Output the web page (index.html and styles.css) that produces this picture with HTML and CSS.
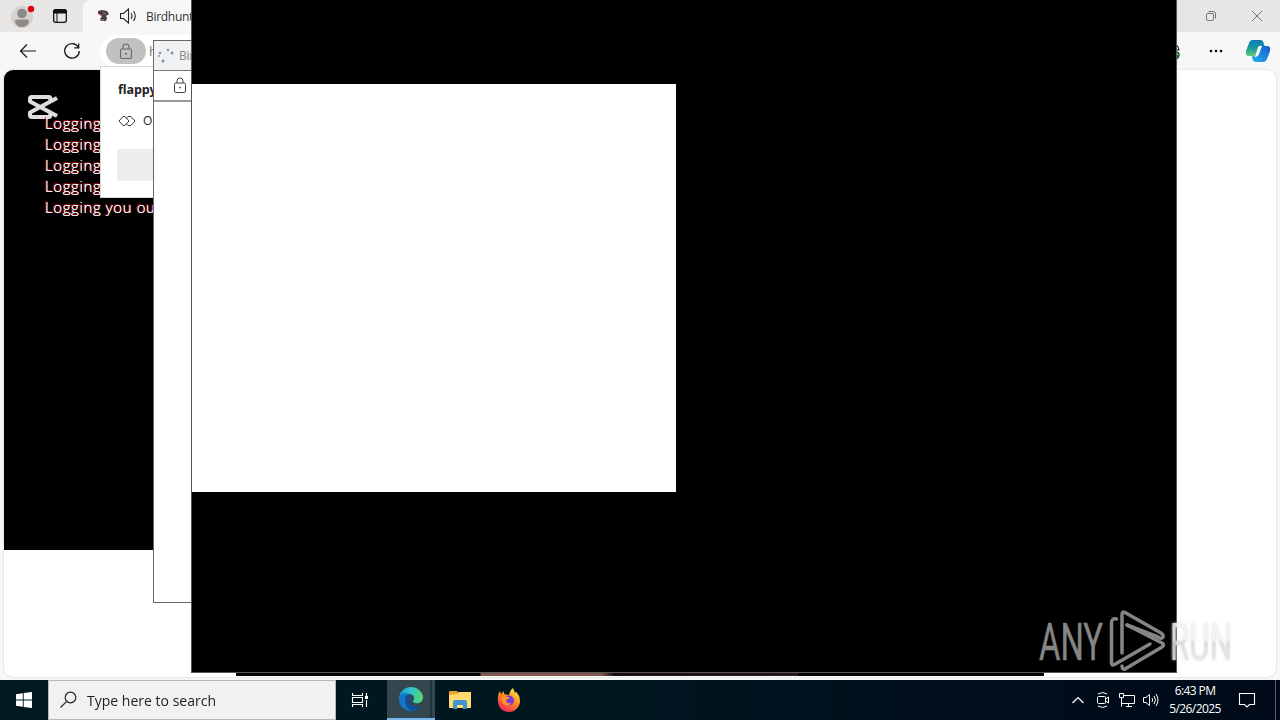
FILE: index.html
```html
<!DOCTYPE html>
<html lang="en">
<head>
<meta charset="utf-8">
<title>Desktop</title>
<link rel="stylesheet" href="styles.css">
</head>
<body>
<main class="desktop">
  <section class="browser">
    <header class="tabs">
      <svg class="profile" width="32" height="30" viewBox="0 0 32 30"><circle cx="16" cy="16" r="11" fill="#d5d2cf"/><circle cx="16" cy="12.500" r="4.800" fill="#8d8a87"/><path d="M9 20q0-1.500 2-1.500h10q2 0 2 1.500c0 4-4 6-7 6s-7-2-7-6z" fill="#8d8a87"/><circle cx="25" cy="8" r="3.200" fill="#e3000f"/></svg>
      <svg class="workspace" width="16" height="16" viewBox="0 0 16 16"><rect x="1.700" y="1.700" width="12.600" height="12.600" rx="2" fill="none" stroke="#111" stroke-width="1.300"/><path d="M1.500 5V3.500q0-2 2-2h9q2 0 2 2V5zM5 5v9" fill="#111" stroke="#111"/></svg>
      <div class="tab">
        <svg width="14" height="16" viewBox="0 0 14 16"><path d="M2 3l4-1 5 1 2 3-3 2 1 2-1 3H5l-1-2 2-3-4-3z" fill="#493f4a"/><path d="M2 5l3 2 2-1M5 11l3 1" stroke="#a44a50" stroke-width="1.200"/><path d="M7 5l3 1M5 12h3" stroke="#918894" stroke-width=".8"/></svg>
        <svg class="sound" width="18" height="18" viewBox="0 0 18 18" fill="none" stroke="#222" stroke-width="1.100"><path d="M1.500 6.500v5h3l5 4.500V2L4.500 6.500zM12 6q2 3 0 6M14.500 4q3.500 5 0 10"/></svg>
        <span>Birdhunt</span>
      </div>
      <div class="caption">
        <svg width="12" height="12" viewBox="0 0 12 12" fill="none" stroke="#777"><rect x="1.500" y="3.500" width="7" height="7" rx="1.500"/><path d="M3.500 1.500H8q2.500 0 2.500 2.500v4.500"/></svg>
        <svg width="12" height="12" viewBox="0 0 12 12" stroke="#777"><path d="M1 1l10 10M11 1L1 11"/></svg>
      </div>
    </header>
    <div class="toolbar">
      <svg class="back" width="18" height="16" viewBox="0 0 18 16" fill="none" stroke="#1a1a1a" stroke-width="1.200"><path d="M17 8H1.500M8 1.500L1.500 8 8 14.500"/></svg>
      <svg class="reload" width="18" height="18" viewBox="0 0 18 18" fill="none" stroke="#1a1a1a" stroke-width="1.300"><path d="M15.200 5A7.300 7.300 0 1 0 16.300 9M15.700 1.500v4.300h-4.500"/></svg>
      <div class="address">
        <span class="site"><svg width="14" height="17" viewBox="0 0 14 17" fill="none" stroke="#666" stroke-width="1.100"><rect x="1.500" y="6" width="11" height="9.500" rx="1.500"/><path d="M4 6V4q0-3 3-3t3 3v2"/><circle cx="7" cy="10.700" r=".5"/></svg></span><span class="url">h</span>
      </div>
      <div class="tools">
        <svg class="ext" width="8" height="20" viewBox="0 0 8 20"><path d="M0 3q5 0 6 6H0" fill="none" stroke="#222" stroke-width="1.200"/><path d="M0 10.500h5q3 2 1 6-2 3-6 2z" fill="#176e20"/><path d="M2 15l3-2" stroke="#fff"/></svg>
        <svg class="dots" width="14" height="4" viewBox="0 0 14 4"><circle cx="2" cy="2" r="1.300"/><circle cx="7" cy="2" r="1.300"/><circle cx="12" cy="2" r="1.300"/></svg>
        <svg class="copilot" width="26" height="24" viewBox="0 0 26 24"><defs><linearGradient id="ca" x1=".3" x2=".3" y2="1"><stop stop-color="#1677b8"/><stop offset=".5" stop-color="#159b9e"/><stop offset="1" stop-color="#62c96b"/></linearGradient><linearGradient id="cb" x1="0" y1="1" x2="1" y2="0"><stop stop-color="#28b0ed"/><stop offset=".6" stop-color="#197ede"/><stop offset="1" stop-color="#1b57c5"/></linearGradient></defs><path d="M8 1h8q2 0 2.700 3l.8 3H16q-2 0-3 3l-2 5q-.8 2-3 2H4q-4 0-3-5L4 4q1-3 4-3z" fill="url(#ca)"/><path d="M18 7h4q4 0 3 5l-3 8q-1 3-4 3h-7q-3 0-3.500-3L7 17h2q2 0 3-3l2-4q1-3 4-3z" fill="url(#cb)"/><path d="M13 8q1-1.500 4-1l-3 8q-1 3-5 3 2-1 2-3z" fill="#fff"/></svg>
      </div>
    </div>
    <div class="page">
      <div class="game">
        <svg class="mark" width="32" height="26" viewBox="0 0 32 26" fill="none" stroke="#dedede" stroke-width="4" stroke-linejoin="round"><path d="M30 4L3 18.500V21q0 2 2 2h17q2 0 1-3.500M30 22L3 7.500V5q0-2 2-2h17q2 0 1 3.500"/></svg>
        <p>Logging you out</p><p>Logging you out</p><p>Logging you out</p><p>Logging you out</p><p>Logging you out</p>
      </div>
    </div>
  </section>

  <aside class="prompt">
    <strong>flappy</strong>
    <div class="permission"><svg width="18" height="12" viewBox="0 0 18 12" fill="none" stroke="#333"><path d="M5 1.500h2L11 6l-4 4.500H5L1 6zM10 1.500h3L17 6l-4 4.500h-3L8 8.500M8 3.500l2-2"/></svg><span>O</span></div>
    <div class="button"></div>
  </aside>

  <section class="popup-back">
    <div class="popup-title"><svg width="18" height="18" viewBox="0 0 18 18" fill="#7893b2"><circle cx="3" cy="6" r="1.300"/><circle cx="11" cy="3" r="1.200"/><circle cx="15" cy="6" r="1.500"/><circle cx="6" cy="14" r="1.500"/><circle cx="2" cy="9" r=".9"/></svg><span>Birdhunt</span></div>
    <div class="popup-address"><svg width="14" height="17" viewBox="0 0 14 17" fill="none" stroke="#444"><rect x="1.500" y="6" width="11" height="9.500" rx="1.500"/><path d="M4 6V4q0-3 3-3t3 3v2"/><circle cx="7" cy="10.700" r=".5"/></svg></div>
  </section>
  <section class="popup-edge"></section>
  <section class="popup-front"><div class="blank"></div></section>

  <svg class="watermark" width="210" height="66" viewBox="0 0 210 66">
    <defs><linearGradient id="fade" gradientUnits="userSpaceOnUse" x1="0" y1="14" x2="0" y2="52"><stop offset=".45" stop-color="#f2f2f2"/><stop offset=".55" stop-color="#dadada"/><stop offset="1" stop-color="#e6e6e6"/></linearGradient><linearGradient id="letters" gradientUnits="userSpaceOnUse" x1="134" y1="0" x2="196" y2="0"><stop offset=".105" stop-color="#858585"/><stop offset=".11" stop-color="#858585" stop-opacity="0"/></linearGradient></defs>
    <text class="any" x="3" y="51.500" textLength="64" lengthAdjust="spacingAndGlyphs">ANY</text>
    <g class="run"><text x="134" y="51.500" textLength="62" lengthAdjust="spacingAndGlyphs">RUN</text></g>
    <path d="M136 14.500v37" stroke="url(#letters)" stroke-width="0"/>
    <g fill="none" stroke="#858585" stroke-width="3.500" stroke-linejoin="round" stroke-linecap="round"><path d="M80.500 11q-5-1-5 4v40q0 3 3 1.500L114 36"/><path d="M86 45V7q0-4 3-2.500L125 25q4 3 1 5-2 1-4-1L91 17"/><path d="M91 17l35 18q3 2 0 4L89 61q-3 1-3-3"/></g>
  </svg>

  <footer class="taskbar">
    <div class="start"><svg width="16" height="16" viewBox="0 0 16 16" fill="#fff"><path d="M0 2.200l6.800-1V7.500H0zM7.700 1L16 0v7.500H7.700zM0 8.400h6.800v6.400L0 13.800zM7.700 8.400H16V16l-8.300-1z"/></svg></div>
    <div class="search"><svg width="18" height="18" viewBox="0 0 18 18" fill="none" stroke="#222" stroke-width="1.200"><circle cx="10.500" cy="6.500" r="5.300"/><path d="M6.700 10.300L.5 16.500"/></svg><span>Type here to search</span></div>
    <div class="app"><svg width="18" height="18" viewBox="0 0 18 18" fill="none" stroke="#fff" stroke-width="1.100"><path d="M1.500 2v2.500h10V2M1.500 16v-2.500h10V16M1.500 6.500h10v5h-10zM15.500 2v3M15.500 9v7"/><path d="M14.500 5.500h2v2h-2z" fill="#fff"/></svg></div>
    <div class="app active"><svg width="26" height="26" viewBox="0 0 26 26"><defs><linearGradient id="ea"><stop stop-color="#219bd8"/><stop offset=".5" stop-color="#2bc6d0"/><stop offset="1" stop-color="#62d667"/></linearGradient></defs><path d="M1 12C2 5 7 1 13 1s12 5 12 10c0 5-4 7-8 6-3-1-2-2-1-4 1-3-2-5-5-5-5 0-9 2-10 5z" fill="url(#ea)"/><path d="M1 13c0-5 5-7 10-5-5 2-5 9 0 13 3 2 7 2 10 0-2 3-6 5-9 4C5 24 1 19 1 13z" fill="#1477ce"/><path d="M11 8c-6 3-5 12 2 17 4 0 8-2 9-5-6 2-11-1-11-6 0-2 1-3 2-4z" fill="#104f9b"/></svg></div>
    <div class="app"><svg width="22" height="20" viewBox="0 0 22 20"><path d="M0 2q0-1 1-1h7l2 2h11q1 0 1 1v14H0z" fill="#e6a52c"/><path d="M0 5l8-1 2-2h12v16H0z" fill="#ffda6c"/><path d="M4 19v-7q0-2 2-2h10q2 0 2 2v7h-4v-4H8v4z" fill="#3d94d1"/></svg></div>
    <div class="app"><svg width="24" height="24" viewBox="0 0 24 24"><defs><linearGradient id="ff" x1=".8" y1="0" x2=".2" y2="1"><stop stop-color="#ffec42"/><stop offset=".45" stop-color="#ff8b24"/><stop offset="1" stop-color="#ef1c62"/></linearGradient></defs><path d="M1 13Q0 7 3 3l1 3 3-3v3l5 1q1-5 4-7l2 5q1-1 0-2 5 4 5 10c0 6-5 11-11 11S1 20 1 13z" fill="url(#ff)"/><circle cx="12" cy="12.500" r="5" fill="#783bd7"/><path d="M4 9q5-2 9 1l-4 2q0 4 5 3-2 4-6 2-4-3-4-8z" fill="#ff9325"/></svg></div>
    <div class="tray">
      <svg width="14" height="10" viewBox="0 0 14 10" fill="none" stroke="#fff" stroke-width="1.200"><path d="M1.500 8L7 2.500 12.500 8"/></svg>
      <svg class="meet" width="14" height="18" viewBox="0 0 14 18" fill="none" stroke="#fff"><rect x="1.500" y="5.500" width="8" height="7" rx="1"/><path d="M9.500 8l3-2v6l-3-2M2 3q5-3 9 0M2 15q5 3 9 0"/></svg>
      <svg class="network" width="18" height="16" viewBox="0 0 18 16" fill="none" stroke="#fff"><path d="M6 3.500h10.500v8h-13V7M8 14.500h6M10.500 11.500v3M1.500 1.500h4v4h-4zM3.500 5.500v9"/></svg>
      <svg class="volume" width="18" height="16" viewBox="0 0 18 16" fill="none" stroke="#fff"><path d="M1.500 5.500v5H4l3.500 3v-11L4 5.500zM10 6q1.500 2 0 4M12 4q3 4 0 8M14 2q4 6 0 12"/></svg>
      <div class="clock"><span>6:43 PM</span><span>5/26/2025</span></div>
      <svg class="notice" width="18" height="18" viewBox="0 0 18 18" fill="none" stroke="#fff" stroke-width="1.100"><path d="M1.500 2.500h15v11h-5L9 16l-2.500-2.500h-5z"/></svg>
      <i></i>
    </div>
  </footer>
</main>
</body>
</html>
```

FILE: styles.css
```css
* { box-sizing: border-box; }
body { margin: 0; overflow: hidden; font: 12px "Open Sans", "Noto Sans", sans-serif; }
svg { display: block; flex: none; }
p { margin: 0; }
.desktop { position: relative; width: 1280px; height: 720px; overflow: hidden; background: #f7f7f7; }
.browser { height: 680px; display: flex; flex-direction: column; white-space: nowrap; }
.tabs { height: 32px; background: #e7e6e5; display: flex; align-items: center; padding-left: 6px; }
.workspace { margin-left: 14px; }
.tab { align-self: stretch; display: flex; align-items: center; margin-left: 15px; padding-left: 13px; width: 240px; background: #f7f7f7; border-radius: 8px 0 0; color: #333; letter-spacing: -.3px; }
.sound { margin: 0 9px; }
.caption { display: flex; gap: 34px; margin-left: auto; padding-right: 17px; }
.toolbar { height: 38px; display: flex; align-items: center; padding-left: 19px; }
.reload { margin-left: 26px; }
.address { display: flex; align-items: center; width: 500px; height: 32px; margin-left: 19px; padding-left: 6px; border-radius: 16px; background: #fff; color: #777; font-size: 13px; }
.site { width: 40px; height: 26px; border-radius: 13px; background: #c1c1c1; display: grid; place-items: center; }
.url { margin-left: 3px; }
.tools { display: flex; align-items: center; margin-left: auto; padding-right: 9px; }
.dots { margin-left: 28px; }
.copilot { margin-left: 22px; }
.page { height: 607px; margin: 0 4px; background: #fff; border-radius: 9px; overflow: hidden; box-shadow: 0 0 2px #c5c5c5; }
.game { width: 240px; height: 480px; background: #000; padding: 23px 0 0 41px; color: #fff; font-size: 15px; font-weight: 300; line-height: 21px; text-shadow: 0 0 .5px #fff, -1.5px -1px #c20016; letter-spacing: .6px; }
.mark { margin: 1px 0 -7px -18px; }
.prompt { position: absolute; left: 100px; top: 66px; width: 180px; height: 132px; padding: 14px 17px 14px 16px; background: #fff; border: 1px solid #d8d8d8; color: #222; line-height: 17px; }
.prompt strong { margin-left: 1px; font-size: 12.5px; letter-spacing: -.1px; }
.permission { display: flex; align-items: center; gap: 7px; margin: 14px 0 20px 1px; font-size: 12px; }
.button { height: 32px; background: #ededed; border-radius: 2px; }
.popup-back { position: absolute; left: 153px; top: 40px; width: 140px; height: 563px; border: 1px solid #666; background: #fff; }
.popup-title { display: flex; align-items: center; height: 30px; padding-left: 3px; background: #f0f1f3; color: #888; font-size: 12px; letter-spacing: -.3px; border-bottom: 1px solid #777; }
.popup-title span { margin-left: 4px; }
.popup-address { height: 31px; padding: 6px 0 0 19px; border-bottom: 2px solid #999; }
.popup-edge { position: absolute; left: 236px; top: 640px; width: 808px; height: 36px; background: linear-gradient(90deg, #000 0 244px, #83544e 245px 366px, #1c0b0e 378px, #291618 562px, #000 563px); }
.popup-front { position: absolute; left: 191px; top: 0; width: 986px; height: 673px; border: solid #555; border-width: 0 1px 1px; background: #000; padding-top: 84px; }
.blank { width: 484px; height: 408px; background: #fff; }
.watermark { position: absolute; left: 1036px; top: 608px; font: 400 52px Roboto, sans-serif; }
.any { fill: #858585; stroke: #858585; stroke-width: .5; }
.run { fill: url(#fade); filter: drop-shadow(0 0 1.5px #ddd); opacity: .9; }
.taskbar { position: absolute; left: 0; top: 680px; width: 1280px; height: 40px; display: flex; color: #fff; background: linear-gradient(90deg, #001820, #001720 46%, #000e1b 75%, #000a19); }
.start { width: 48px; display: grid; place-items: center; }
.search { width: 288px; border: 1px solid #b7b7b7; background: #f1f1f1; color: #222; display: flex; align-items: center; padding-left: 11px; font-size: 15px; }
.search span { margin-left: 9px; white-space: nowrap; transform: scaleX(.935); transform-origin: left; }
.app { width: 48px; margin-right: 1px; display: grid; place-items: center; }
.active { background: linear-gradient(90deg, #35474e 90%, #1b3039 91% 93%, #35474e 94%); border-bottom: 2px solid #78b7e9; margin-left: 3px; }
.search + .app { margin-right: 0; }
.tray { margin-left: auto; display: flex; align-items: center; }
.meet { margin-left: 11px; }
.network { margin-left: 8px; }
.volume { margin-left: 6px; }
.clock { width: 54px; margin-left: 8px; display: flex; flex-direction: column; align-items: center; font-size: 12px; line-height: 18px; letter-spacing: -.6px; white-space: nowrap; }
.notice { margin-left: 16px; }
.tray i { align-self: stretch; width: 1px; margin: 0 4px 0 19px; background: #596071; }
```
